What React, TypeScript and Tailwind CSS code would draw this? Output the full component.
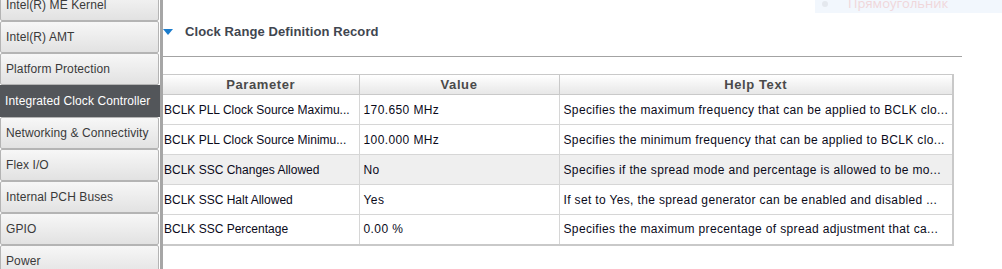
const navItems = [
  'Intel(R) ME Kernel',
  'Intel(R) AMT',
  'Platform Protection',
  'Integrated Clock Controller',
  'Networking & Connectivity',
  'Flex I/O',
  'Internal PCH Buses',
  'GPIO',
  'Power',
];

const rows = [
  ['BCLK PLL Clock Source Maximu...', '170.650 MHz', 'Specifies the maximum frequency that can be applied to BCLK clo...'],
  ['BCLK PLL Clock Source Minimu...', '100.000 MHz', 'Specifies the minimum frequency that can be applied to BCLK clo...'],
  ['BCLK SSC Changes Allowed', 'No', 'Specifies if the spread mode and percentage is allowed to be mo...'],
  ['BCLK SSC Halt Allowed', 'Yes', 'If set to Yes, the spread generator can be enabled and disabled ...'],
  ['BCLK SSC Percentage', '0.00 %', 'Specifies the maximum precentage of spread adjustment that ca...'],
];

const Sidebar = () => (
  <div className="w-[163px] shrink-0 border-r-[3px] border-[#a6a6a6] h-[269px] overflow-hidden">
    <div className="mt-[-11px] flex flex-col tracking-[0.1px]">
      {navItems.map((item) => {
        const active = item === 'Integrated Clock Controller';
        return (
          <div
            key={item}
            className={
              active
                ? 'h-[32px] flex items-center pl-[5px] bg-[#53565a] text-white border-b border-[#53565a]'
                : 'h-[32px] flex items-center pl-[5px] bg-gradient-to-b from-[#f7f7f7] to-[#e2e2e2] text-[#3a3a3a] border border-[#b4b4b4] rounded-[2px] mr-[1px]'
            }
          >
            {item}
          </div>
        );
      })}
    </div>
  </div>
);

export default function App() {
  return (
    <div className="relative w-[1002px] h-[269px] bg-white overflow-hidden flex text-[12px] font-['Liberation_Sans',Tahoma,sans-serif]">
      <Sidebar />

      <div className="flex-1">
        <div className="w-[799px] h-[57px] pt-[24px] border-b border-[#a3a3a3] flex items-start">
          <div className="h-[16px] flex items-center">
            <svg width="10" height="6" viewBox="0 0 10 6">
              <polygon points="0,0 10,0 5,6" fill="#1b7ccc" />
            </svg>
            <span className="ml-[12px] text-[13px] tracking-[0.1px] font-bold text-[#3f4650]">Clock Range Definition Record</span>
          </div>
        </div>

        <table className="mt-[17px] w-[791px] border-collapse table-fixed border-t border-r-2 border-b-2 border-[#c9c9c9]">
          <colgroup>
            <col className="w-[196px]" />
            <col className="w-[200px]" />
            <col />
          </colgroup>
          <thead>
            <tr className="h-[20px] bg-gradient-to-b from-white to-[#e6e6e6] text-[#4a4a4a] text-[13px] leading-[16px] tracking-[0.6px]">
              <th className="p-0 font-bold text-center border-r border-b border-[#c9c9c9]">Parameter</th>
              <th className="p-0 font-bold text-center border-r border-b border-[#c9c9c9]">Value</th>
              <th className="p-0 font-bold text-center border-b border-[#c9c9c9]">Help Text</th>
            </tr>
          </thead>
          <tbody>
            {rows.map((r, i) => (
              <tr key={r[0]} className={i === 2 ? 'h-[30px] bg-[#efefef]' : 'h-[30px] bg-white'}>
                <td className="pl-[1px] text-[#0a0a1a] whitespace-nowrap overflow-hidden border-b border-r border-[#d6d6d6]">{r[0]}</td>
                <td className="pl-[4px] tracking-[0.4px] text-[#0a0a1a] whitespace-nowrap overflow-hidden border-b border-r border-[#d6d6d6]">{r[1]}</td>
                <td className="pl-[4px] tracking-[0.35px] text-[#0a0a1a] whitespace-nowrap overflow-hidden border-b border-[#d6d6d6]">{r[2]}</td>
              </tr>
            ))}
          </tbody>
        </table>
      </div>

      <div className="absolute top-[-6px] left-[815px] w-[187px] h-[19px] bg-[#f2f7fd] flex items-center">
        <span className="ml-[7px] w-[6px] h-[6px] rounded-full bg-[#e4e8ee]" />
        <span className="ml-[20px] text-[#f0d6da] text-[13px] font-['Open_Sans',sans-serif]">Прямоугольник</span>
      </div>
    </div>
  );
}
